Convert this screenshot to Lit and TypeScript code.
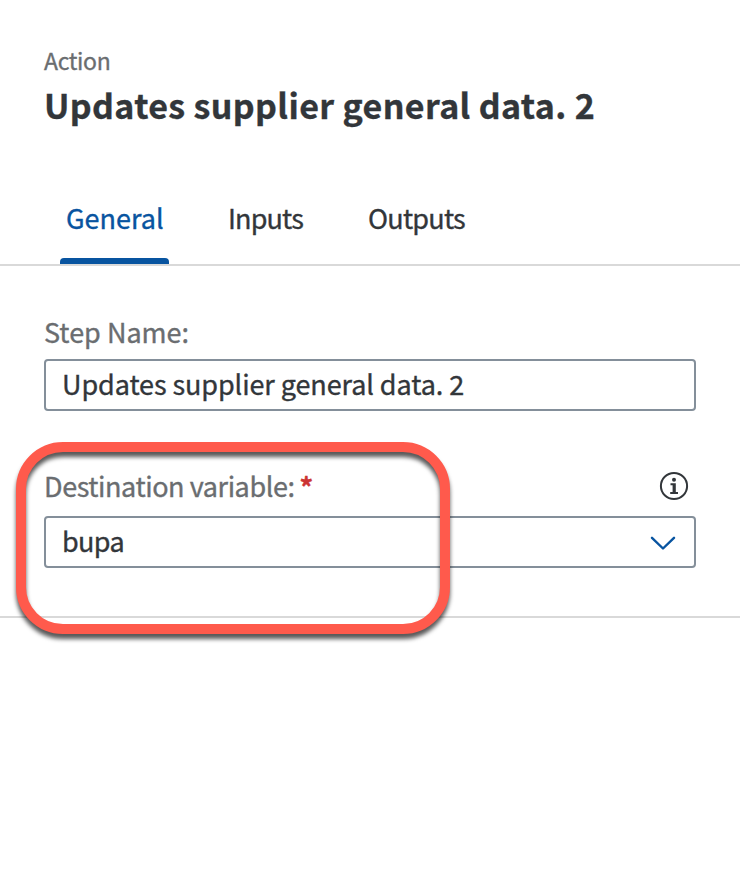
import { LitElement, html, css } from "lit";
import { customElement } from "lit/decorators.js";

@customElement("app-root")
export class AppRoot extends LitElement {
  static styles = css`
    :host {
      display: block;
      position: relative;
      height: 890px;
      overflow: hidden;
      background: #fff;
      color: #32363a;
      font-family: "Noto Sans CJK JP", "Noto Sans", sans-serif;
      font-size: 27px;
      -webkit-text-stroke-width: 0.35px;
    }
    * { box-sizing: border-box; }
    header { padding: 46px 44px 0; height: 190px; }
    .kind { font-size: 23px; line-height: 28px; color: #6a6d70; letter-spacing: -0.35px; }
    h1 { margin: 9px 0 0; font-size: 34px; line-height: 44px; font-weight: 700; letter-spacing: 0.37px; white-space: nowrap; }
    nav { display: flex; height: 76px; padding-left: 60px; border-bottom: 2px solid #d9d9d9; }
    .tab { display: flex; flex-direction: column; justify-content: space-between; padding: 8px 6px 0; line-height: 40px; white-space: nowrap; }
    .tab.general { width: 109px; margin-right: 53px; color: #0854a0; }
    .tab.inputs { width: 88px; margin-right: 52px; letter-spacing: -0.85px; }
    .tab.outputs { letter-spacing: -0.75px; }
    .tab.general::after { content: ""; height: 6px; margin: 0 -6px; border-radius: 4px 4px 0 0; background: #0854a0; }
    .form { height: 352px; padding: 48px 44px 0; border-bottom: 2px solid #d9d9d9; }
    .row { display: flex; align-items: center; height: 35px; margin-bottom: 10px; color: #6a6d70; white-space: nowrap; }
    .req { color: #cc3434; font-weight: 700; margin: 2px 0 0 5px; }
    .info { margin: 0 7px 0 auto; }
    .field { display: flex; align-items: center; justify-content: space-between; height: 52px; padding: 0 18px 0 16px; border: 2px solid #848f9a; border-radius: 4px; line-height: 45px; white-space: nowrap; }
    .field .value { height: 48px; letter-spacing: -0.09px; }
    .select { line-height: 46px; }
    .select .value { letter-spacing: -0.65px; }
    .select svg { margin-top: 2px; }
    .dest { margin-top: 57px; margin-bottom: 13px; }
    .dest .label { letter-spacing: -0.43px; }
    .mark { position: absolute; left: 16px; top: 442px; width: 434px; height: 192px; border: 10px solid #ff5a4c; border-radius: 47px; filter: drop-shadow(0 5px 2px rgba(0, 0, 0, 0.65)); }
    svg { display: block; fill: none; }
  `;

  render() {
    return html`
      <header>
        <div class="kind">Action</div>
        <h1>Updates supplier general data. 2</h1>
      </header>
      <nav>
        <div class="tab general"><span>General</span></div>
        <div class="tab inputs"><span>Inputs</span></div>
        <div class="tab outputs"><span>Outputs</span></div>
      </nav>
      <div class="form">
        <div class="row"><span class="label">Step Name:</span></div>
        <div class="field"><span class="value">Updates supplier general data. 2</span></div>
        <div class="row dest">
          <span class="label">Destination variable:</span><span class="req">*</span>
          <svg class="info" width="30" height="30" viewBox="0 0 30 30">
            <circle cx="15" cy="15" r="13.1" stroke="#32363a" stroke-width="2" />
            <circle cx="15" cy="8.8" r="2" fill="#32363a" />
            <path d="M11.5 12.2H16.8V21H19V23H11.2V21H13.6V14.2H11.5Z" fill="#32363a" />
          </svg>
        </div>
        <div class="field select"><span class="value">bupa</span>
          <svg width="26" height="14" viewBox="0 0 26 14">
            <path d="M2 1.8L13 12.5L24 1.8" stroke="#0854a0" stroke-width="2.4" stroke-linecap="round" stroke-linejoin="round" />
          </svg>
        </div>
      </div>
      <div class="mark"></div>
    `;
  }
}
